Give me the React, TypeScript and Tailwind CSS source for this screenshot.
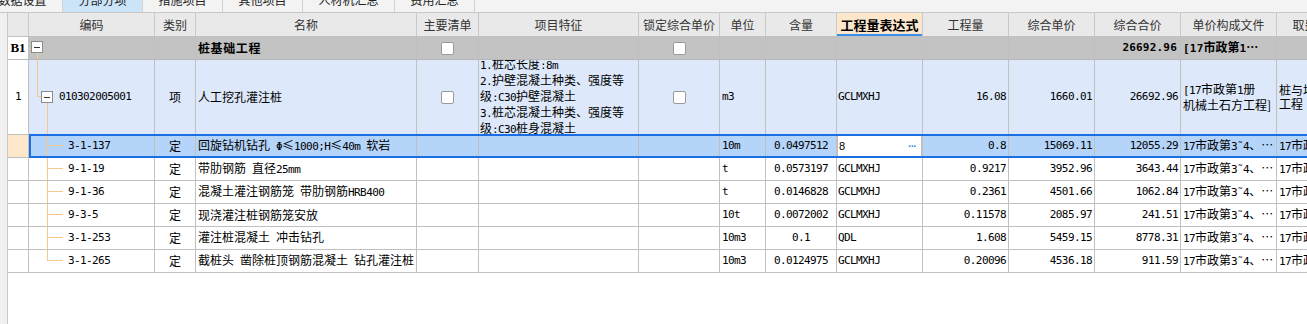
import React from 'react';

const cjk = "font-['Noto_Sans_CJK_SC',sans-serif]";

type Col = { w: string; label: string };

const cols: Col[] = [
  { w: 'w-[21px]', label: '' },
  { w: 'w-[126px]', label: '编码' },
  { w: 'w-[41px]', label: '类别' },
  { w: 'w-[221px]', label: '名称' },
  { w: 'w-[62px]', label: '主要清单' },
  { w: 'w-[160px]', label: '项目特征' },
  { w: 'w-[81px]', label: '锁定综合单价' },
  { w: 'w-[46px]', label: '单位' },
  { w: 'w-[71px]', label: '含量' },
  { w: 'w-[86px]', label: '工程量表达式' },
  { w: 'w-[86px]', label: '工程量' },
  { w: 'w-[86px]', label: '综合单价' },
  { w: 'w-[86px]', label: '综合合价' },
  { w: 'w-[96px]', label: '单价构成文件' },
  { w: 'w-[80px]', label: '取费专业' },
];

const tabs = [
  { label: '数据设置', w: 'w-[80px] -ml-[17px]' },
  { label: '分部分项', w: 'w-[80px]', active: true },
  { label: '措施项目', w: 'w-[80px]' },
  { label: '其他项目', w: 'w-[80px]' },
  { label: '人材机汇总', w: 'w-[92px]' },
  { label: '费用汇总', w: 'w-[80px]' },
];

// half-width text (digits, latin) in a monospace face
const M = ({ children, b }: { children: React.ReactNode; b?: boolean }) => (
  <span
    className={`font-['DejaVu_Sans_Mono',monospace] ${
      b ? 'text-[11px] font-bold tracking-[0.2px]' : 'text-[11px] tracking-[-0.6px]'
    }`}
  >
    {children}
  </span>
);

const Cell = ({
  i,
  className = '',
  children,
}: {
  i: number;
  className?: string;
  children?: React.ReactNode;
}) => (
  <div
    className={`${cols[i].w} shrink-0 h-full border-r border-[#c0c0c0] flex items-center overflow-hidden whitespace-nowrap ${className}`}
  >
    {children}
  </div>
);

const Check = () => <div className="w-[13px] h-[13px] bg-white border border-[#9a9a9a] rounded-[2px]" />;

const Box = ({ x, y }: { x: number; y: number }) => (
  <g>
    <rect x={x + 0.5} y={y + 0.5} width={11} height={11} fill="#fff" stroke="#8c8c8c" />
    <line x1={x + 3} x2={x + 9} y1={y + 6} y2={y + 6} stroke="#333" />
  </g>
);

const tree = '#f6c88c';

type Item = {
  code: string;
  name: React.ReactNode;
  unit: string;
  qty: string;
  expr: string;
  amt: string;
  price: string;
  total: string;
  sel?: boolean;
};

const items: Item[] = [
  {
    code: '3-1-137',
    name: (
      <>
        回旋钻机钻孔<M> Φ</M>≤<M>1000;H</M>≤<M>40m </M>软岩
      </>
    ),
    unit: '10m',
    qty: '0.0497512',
    expr: '8',
    amt: '0.8',
    price: '15069.11',
    total: '12055.29',
    sel: true,
  },
  {
    code: '9-1-19',
    name: (
      <>
        带肋钢筋<M> </M>直径<M>25mm</M>
      </>
    ),
    unit: 't',
    qty: '0.0573197',
    expr: 'GCLMXHJ',
    amt: '0.9217',
    price: '3952.96',
    total: '3643.44',
  },
  {
    code: '9-1-36',
    name: (
      <>
        混凝土灌注钢筋笼<M> </M>带肋钢筋<M>HRB400</M>
      </>
    ),
    unit: 't',
    qty: '0.0146828',
    expr: 'GCLMXHJ',
    amt: '0.2361',
    price: '4501.66',
    total: '1062.84',
  },
  {
    code: '9-3-5',
    name: '现浇灌注桩钢筋笼安放',
    unit: '10t',
    qty: '0.0072002',
    expr: 'GCLMXHJ',
    amt: '0.11578',
    price: '2085.97',
    total: '241.51',
  },
  {
    code: '3-1-253',
    name: (
      <>
        灌注桩混凝土<M> </M>冲击钻孔
      </>
    ),
    unit: '10m3',
    qty: '0.1',
    expr: 'QDL',
    amt: '1.608',
    price: '5459.15',
    total: '8778.31',
  },
  {
    code: '3-1-265',
    name: (
      <>
        截桩头<M> </M>凿除桩顶钢筋混凝土<M> </M>钻孔灌注桩
      </>
    ),
    unit: '10m3',
    qty: '0.0124975',
    expr: 'GCLMXHJ',
    amt: '0.20096',
    price: '4536.18',
    total: '911.59',
  },
];

const FileText = () => (
  <span>
    <M>17</M>市政第<M>3˜4</M>、…
  </span>
);

export default function App() {
  return (
    <div className={`w-[1307px] h-[324px] overflow-hidden bg-[#f3f3f3] text-black ${cjk} text-[12px]`}>
      {/* tab strip, scrolled partly out of view */}
      <div className="h-[13px] border-b border-[#c8c8c8] overflow-hidden">
        <div className="flex h-[25px] -mt-[13px]">
          {tabs.map((t) => (
            <div
              key={t.label}
              className={`${t.w} shrink-0 flex items-center justify-center border-r border-[#d2d2d2] text-[12px] text-[#222] ${
                t.active ? 'bg-[#cce4f8]' : 'bg-[#f3f3f3]'
              }`}
            >
              {t.label}
            </div>
          ))}
        </div>
      </div>

      <div className="flex h-[311px]">
        <div className="w-[7px] shrink-0 bg-[#f0f0f0]" />
        <div className="flex-1 bg-white border-l border-[#c8c8c8] overflow-hidden">
          <div className="w-max">
            {/* header */}
            <div className="flex h-[24px] bg-[#e9e9e9] border-b border-[#c0c0c0] text-[#333]">
              {cols.map((c, i) =>
                i === 9 ? (
                  <div
                    key={i}
                    className={`${c.w} shrink-0 h-full border-r border-[#c8c8c8] flex items-center justify-center bg-[#fde7cc] font-bold text-[13px] text-black shadow-[inset_0_-2px_0_#3b8fe9]`}
                  >
                    {c.label}
                  </div>
                ) : (
                  <div
                    key={i}
                    className={`${c.w} shrink-0 h-full border-r border-[#c8c8c8] flex items-center justify-center whitespace-nowrap overflow-hidden`}
                  >
                    {c.label}
                  </div>
                )
              )}
            </div>

            {/* B1 */}
            <div className="flex h-[23px] bg-[#c3c3c3] border-b border-[#b8b8b8]">
              <Cell i={0} className="bg-white justify-center font-['Liberation_Serif',serif] font-bold text-[13px]">
                B1
              </Cell>
              <Cell i={1} className="relative border-[#b8b8b8]">
                <svg className="absolute left-0 top-0" width="30" height="22" shapeRendering="crispEdges">
                  <line x1={8.5} x2={8.5} y1={16} y2={22} stroke={tree} />
                  <Box x={2} y={4} />
                </svg>
              </Cell>
              <Cell i={2} className="border-[#b8b8b8]" />
              <Cell i={3} className="pl-[2px] font-bold text-[12px] tracking-[0.6px] border-[#b8b8b8]">
                桩基础工程
              </Cell>
              <Cell i={4} className="justify-center border-[#b8b8b8]">
                <Check />
              </Cell>
              <Cell i={5} className="border-[#b8b8b8]" />
              <Cell i={6} className="justify-center border-[#b8b8b8]">
                <Check />
              </Cell>
              <Cell i={7} className="border-[#b8b8b8]" />
              <Cell i={8} className="border-[#b8b8b8]" />
              <Cell i={9} className="border-[#b8b8b8]" />
              <Cell i={10} className="border-[#b8b8b8]" />
              <Cell i={11} className="border-[#b8b8b8]" />
              <Cell i={12} className="justify-end pr-[3px] border-[#b8b8b8]">
                <M b>26692.96</M>
              </Cell>
              <Cell i={13} className="pl-[2px] font-bold border-[#b8b8b8]">
                <span>
                  <M b>[17</M>市政第<M b>1</M>…
                </span>
              </Cell>
              <Cell i={14} className="border-[#b8b8b8]" />
            </div>

            {/* 清单 row */}
            <div className="flex h-[75px] bg-[#dde9fb] border-b border-[#c0c0c0]">
              <Cell i={0} className="bg-white justify-center">
                <M>1</M>
              </Cell>
              <Cell i={1} className="relative pl-[30px]">
                <svg className="absolute left-0 top-0" width="30" height="74" shapeRendering="crispEdges">
                  <line x1={8.5} x2={8.5} y1={0} y2={37} stroke={tree} />
                  <line x1={8.5} x2={13} y1={36.5} y2={36.5} stroke={tree} />
                  <line x1={18.5} x2={18.5} y1={43} y2={74} stroke={tree} />
                  <Box x={12} y={31} />
                </svg>
                <M>010302005001</M>
              </Cell>
              <Cell i={2} className="justify-center">项</Cell>
              <Cell i={3} className="pl-[2px]">人工挖孔灌注桩</Cell>
              <Cell i={4} className="justify-center">
                <Check />
              </Cell>
              <Cell i={5} className="pl-[1px]">
                <div className="leading-[14px]">
                  <div>
                    <M>1.</M>桩芯长度<M>:8m</M>
                  </div>
                  <div>
                    <M>2.</M>护壁混凝土种类、强度等
                  </div>
                  <div>
                    级<M>:C30</M>护壁混凝土
                  </div>
                  <div>
                    <M>3.</M>桩芯混凝土种类、强度等
                  </div>
                  <div>
                    级<M>:C30</M>桩身混凝土
                  </div>
                </div>
              </Cell>
              <Cell i={6} className="justify-center">
                <Check />
              </Cell>
              <Cell i={7} className="pl-[2px]">
                <M>m3</M>
              </Cell>
              <Cell i={8} />
              <Cell i={9} className="pl-[1px]">
                <M>GCLMXHJ</M>
              </Cell>
              <Cell i={10} className="justify-end pr-[2px]">
                <M>16.08</M>
              </Cell>
              <Cell i={11} className="justify-end pr-[2px]">
                <M>1660.01</M>
              </Cell>
              <Cell i={12} className="justify-end pr-[2px]">
                <M>26692.96</M>
              </Cell>
              <Cell i={13} className="pl-[2px]">
                <div className="leading-[14px]">
                  <div>
                    <M>[17</M>市政第<M>1</M>册
                  </div>
                  <div>机械土石方工程]</div>
                </div>
              </Cell>
              <Cell i={14} className="pl-[2px]">
                <div className="leading-[14px]">
                  <div>桩与地基基础</div>
                  <div>工程</div>
                </div>
              </Cell>
            </div>

            {/* 定额 rows */}
            {items.map((it, idx) => {
              const last = idx === items.length - 1;
              return (
                <div
                  key={it.code}
                  className={`relative flex h-[23px] border-b border-[#c0c0c0] ${it.sel ? 'bg-[#b4d4fa]' : 'bg-white'}`}
                >
                  <Cell i={0} className={it.sel ? 'bg-[#fde8cc]' : 'bg-white'} />
                  <Cell i={1} className="relative pl-[39px]">
                    <svg className="absolute left-0 top-0" width="40" height="22" shapeRendering="crispEdges">
                      <line x1={18.5} x2={18.5} y1={0} y2={last ? 11 : 22} stroke={tree} />
                      <line x1={18.5} x2={34} y1={10.5} y2={10.5} stroke={tree} />
                    </svg>
                    <M>{it.code}</M>
                  </Cell>
                  <Cell i={2} className="justify-center">定</Cell>
                  <Cell i={3} className="pl-[2px]">
                    <span>{it.name}</span>
                  </Cell>
                  <Cell i={4} />
                  <Cell i={5} />
                  <Cell i={6} />
                  <Cell i={7} className="pl-[2px]">
                    <M>{it.unit}</M>
                  </Cell>
                  <Cell i={8} className="justify-center">
                    <M>{it.qty}</M>
                  </Cell>
                  {it.sel ? (
                    <Cell
                      i={9}
                      className="bg-white border-l-2 border-r-2 border-[#1b6fe4] -ml-[1px] w-[87px] pl-[1px] pr-[5px] justify-between"
                    >
                      <span className="font-['Liberation_Sans',sans-serif] text-[11px]">{it.expr}</span>
                      <span className="text-[#3a8ee6] font-bold text-[11px] tracking-[-1px] font-['Liberation_Sans',sans-serif]">
                        ···
                      </span>
                    </Cell>
                  ) : (
                    <Cell i={9} className="pl-[1px]">
                      <M>{it.expr}</M>
                    </Cell>
                  )}
                  <Cell i={10} className="justify-end pr-[2px]">
                    <M>{it.amt}</M>
                  </Cell>
                  <Cell i={11} className="justify-end pr-[2px]">
                    <M>{it.price}</M>
                  </Cell>
                  <Cell i={12} className="justify-end pr-[2px]">
                    <M>{it.total}</M>
                  </Cell>
                  <Cell i={13} className="pl-[2px]">
                    <FileText />
                  </Cell>
                  <Cell i={14} className="pl-[2px]">
                    <FileText />
                  </Cell>
                  {it.sel && (
                    <div className="absolute left-[21px] right-0 -top-[1px] h-[24px] border-2 border-[#1b6fe4] pointer-events-none" />
                  )}
                </div>
              );
            })}
          </div>
        </div>
      </div>
    </div>
  );
}
